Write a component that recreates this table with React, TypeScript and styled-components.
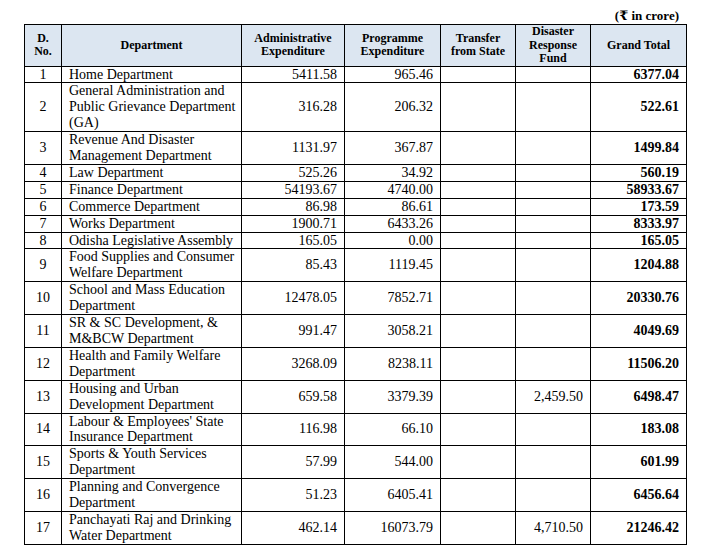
import React from "react";
import styled, { createGlobalStyle } from "styled-components";

const Global = createGlobalStyle`
  html, body { margin: 0; padding: 0; background: #fff; }
  body { font-family: "Liberation Serif", "Times New Roman", "DejaVu Serif", serif; color: #000; }
`;

const Page = styled.div`
  width: 704px;
  height: 558px;
  padding: 7px 0 0 24px;
  box-sizing: border-box;
  overflow: hidden;
`;

const Wrap = styled.div`
  width: 662px;
  display: flex;
  flex-direction: column;
`;

const Caption = styled.div`
  align-self: flex-end;
  font-weight: bold;
  font-size: 13px;
  line-height: 17px;
  padding-right: 7px;
`;

const Table = styled.table`
  border-collapse: collapse;
  table-layout: fixed;
  width: 662px;
  border: 1px solid #000;
`;

const Th = styled.th`
  background: #dce6f1;
  border: 1px solid #000;
  font-size: 12px;
  line-height: 13.5px;
  font-weight: bold;
  text-align: center;
  vertical-align: middle;
  padding: 0 2px;
  height: 40px;
`;

const Td = styled.td<{ $align?: "left" | "right" | "center"; $bold?: boolean }>`
  border: 1px solid #000;
  font-size: 14px;
  line-height: 15.9px;
  padding: 0 7px;
  vertical-align: middle;
  text-align: ${(p) => p.$align || "left"};
  font-weight: ${(p) => (p.$bold ? "bold" : "normal")};
  white-space: nowrap;
`;

const DeptCell = styled(Td)`
  white-space: normal;
  padding: 0 2px 0 7px;
`;

type Row = [string, string[], string, string, string, string];

const rows: Row[] = [
  ["1", ["Home Department"], "5411.58", "965.46", "", "6377.04"],
  ["2", ["General Administration and", "Public Grievance Department", "(GA)"], "316.28", "206.32", "", "522.61"],
  ["3", ["Revenue And Disaster", "Management Department"], "1131.97", "367.87", "", "1499.84"],
  ["4", ["Law Department"], "525.26", "34.92", "", "560.19"],
  ["5", ["Finance Department"], "54193.67", "4740.00", "", "58933.67"],
  ["6", ["Commerce Department"], "86.98", "86.61", "", "173.59"],
  ["7", ["Works Department"], "1900.71", "6433.26", "", "8333.97"],
  ["8", ["Odisha Legislative Assembly"], "165.05", "0.00", "", "165.05"],
  ["9", ["Food Supplies and Consumer", "Welfare Department"], "85.43", "1119.45", "", "1204.88"],
  ["10", ["School and Mass Education", "Department"], "12478.05", "7852.71", "", "20330.76"],
  ["11", ["SR & SC Development, &", "M&BCW Department"], "991.47", "3058.21", "", "4049.69"],
  ["12", ["Health and Family Welfare", "Department"], "3268.09", "8238.11", "", "11506.20"],
  ["13", ["Housing and Urban", "Development Department"], "659.58", "3379.39", "2,459.50", "6498.47"],
  ["14", ["Labour & Employees' State", "Insurance Department"], "116.98", "66.10", "", "183.08"],
  ["15", ["Sports & Youth Services", "Department"], "57.99", "544.00", "", "601.99"],
  ["16", ["Planning and Convergence", "Department"], "51.23", "6405.41", "", "6456.64"],
  ["17", ["Panchayati Raj and Drinking", "Water Department"], "462.14", "16073.79", "4,710.50", "21246.42"],
];

export default function App() {
  return (
    <Page>
      <Global />
      <Wrap>
        <Caption>(₹ in crore)</Caption>
        <Table>
          <colgroup>
            <col style={{ width: 37 }} />
            <col style={{ width: 180 }} />
            <col style={{ width: 103 }} />
            <col style={{ width: 96 }} />
            <col style={{ width: 75 }} />
            <col style={{ width: 75 }} />
            <col style={{ width: 96 }} />
          </colgroup>
          <thead>
            <tr>
              <Th>D.<br />No.</Th>
              <Th>Department</Th>
              <Th>Administrative<br />Expenditure</Th>
              <Th>Programme<br />Expenditure</Th>
              <Th>Transfer<br />from State</Th>
              <Th>Disaster<br />Response<br />Fund</Th>
              <Th>Grand Total</Th>
            </tr>
          </thead>
          <tbody>
            {rows.map((r) => (
              <tr key={r[0]}>
                <Td $align="center">{r[0]}</Td>
                <DeptCell>
                  {r[1].map((l, i) => (
                    <React.Fragment key={i}>
                      {i > 0 && <br />}
                      {l}
                    </React.Fragment>
                  ))}
                </DeptCell>
                <Td $align="right">{r[2]}</Td>
                <Td $align="right">{r[3]}</Td>
                <Td $align="right"></Td>
                <Td $align="right">{r[4]}</Td>
                <Td $align="right" $bold>{r[5]}</Td>
              </tr>
            ))}
          </tbody>
        </Table>
      </Wrap>
    </Page>
  );
}
